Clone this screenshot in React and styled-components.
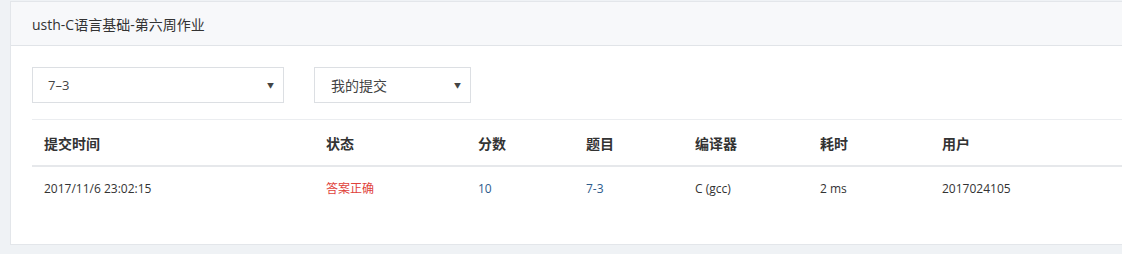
import React from 'react'
import styled, { createGlobalStyle } from 'styled-components'

const GlobalStyle = createGlobalStyle`
  html, body {
    margin: 0;
    padding: 0;
    background: #eff2f5;
    font-family: "Open Sans", "Noto Sans CJK SC", sans-serif;
    font-size: 12px;
    color: #333;
  }
`

const Page = styled.div`
  padding: 1px 0 0 10px;
  height: 253px;
  overflow: hidden;
`

const Card = styled.section`
  background: #fff;
  border: 1px solid #e3e6ea;
  border-right: none;
  width: 1130px;
  height: 244px;
  box-sizing: border-box;
`

const CardHeader = styled.header`
  background: #f7f8fa;
  border-bottom: 1px solid #e1e4e8;
  height: 43px;
  display: flex;
  align-items: center;
  padding: 0 21px;
  font-size: 14px;
  color: #333;
`

const CardBody = styled.div`
  padding: 21px 0 0 21px;
`

const Filters = styled.div`
  display: flex;
  gap: 30px;
  padding-bottom: 16px;
  border-bottom: 1px solid #ebedf0;
`

const Select = styled.div`
  width: ${p => p.$width}px;
  height: 36px;
  box-sizing: border-box;
  border: 1px solid #dcdfe3;
  display: flex;
  align-items: center;
  justify-content: space-between;
  padding: 0 9px 0 ${p => (p.$cjk ? 16 : 15)}px;
  font-size: ${p => (p.$cjk ? 14 : 13)}px;
  color: #444;
`

const Arrow = styled.span`
  font-size: 7px;
  color: #444;
`

const Table = styled.table`
  border-collapse: collapse;
  width: 1100px;
  table-layout: fixed;
`

const Th = styled.th`
  box-sizing: border-box;
  text-align: left;
  font-weight: 700;
  font-size: 14px;
  color: #333;
  height: 46px;
  padding: 0 12px;
  border-bottom: 2px solid #e6e8eb;
  width: ${p => p.$width}px;
`

const Td = styled.td`
  height: 42px;
  padding: 0 12px;
  font-size: 12px;
  color: ${p => p.$color || '#333'};
`

const columns = [
  { title: '提交时间', width: 282 },
  { title: '状态', width: 152 },
  { title: '分数', width: 108 },
  { title: '题目', width: 109 },
  { title: '编译器', width: 125 },
  { title: '耗时', width: 122 },
  { title: '用户', width: 202 }
]

const rows = [
  {
    time: '2017/11/6 23:02:15',
    status: '答案正确',
    score: '10',
    problem: '7-3',
    compiler: 'C (gcc)',
    cost: '2 ms',
    user: '2017024105'
  }
]

export default function App() {
  return (
    <>
      <GlobalStyle />
      <Page>
        <Card>
          <CardHeader>usth-C语言基础-第六周作业</CardHeader>
          <CardBody>
            <Filters>
              <Select $width={252}>
                <span>7–3</span>
                <Arrow>▼</Arrow>
              </Select>
              <Select $width={157} $cjk>
                <span>我的提交</span>
                <Arrow>▼</Arrow>
              </Select>
            </Filters>
            <Table>
              <thead>
                <tr>
                  {columns.map(c => (
                    <Th key={c.title} $width={c.width}>
                      {c.title}
                    </Th>
                  ))}
                </tr>
              </thead>
              <tbody>
                {rows.map(r => (
                  <tr key={r.time}>
                    <Td>{r.time}</Td>
                    <Td $color="#e0413a">{r.status}</Td>
                    <Td $color="#2d5b8c">{r.score}</Td>
                    <Td $color="#2d5b8c">{r.problem}</Td>
                    <Td>{r.compiler}</Td>
                    <Td>{r.cost}</Td>
                    <Td>{r.user}</Td>
                  </tr>
                ))}
              </tbody>
            </Table>
          </CardBody>
        </Card>
      </Page>
    </>
  )
}
